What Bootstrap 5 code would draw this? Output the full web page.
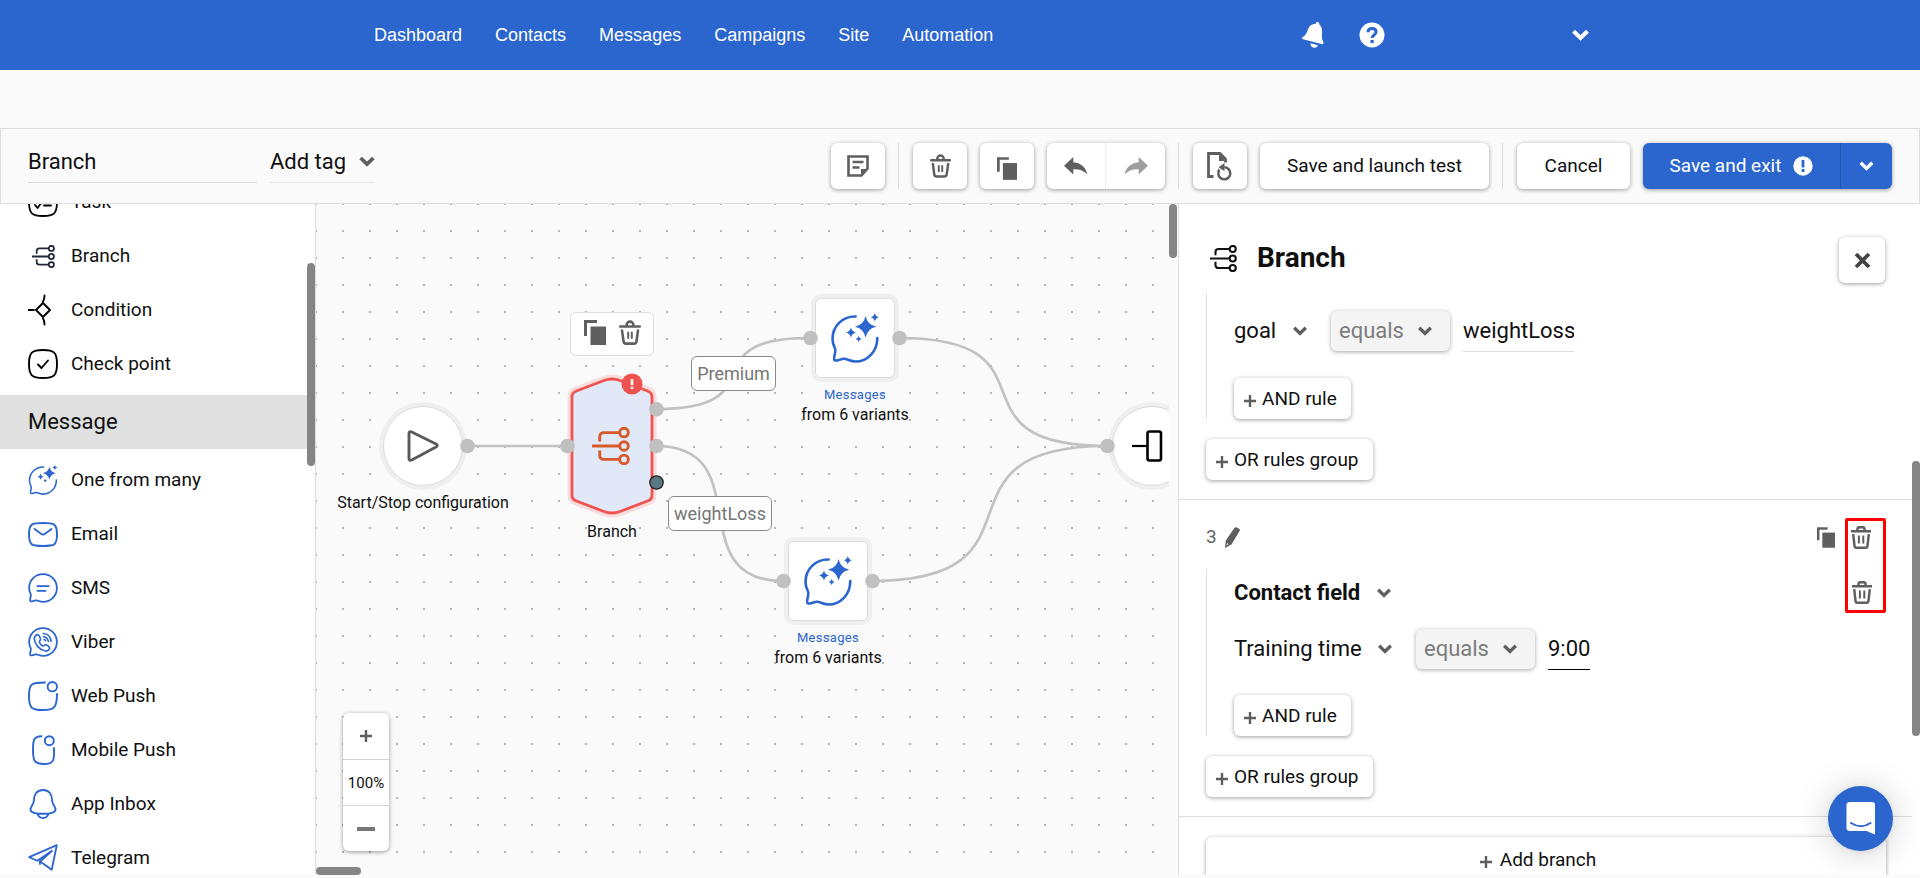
<!DOCTYPE html>
<html lang="en">
<head>
<meta charset="utf-8">
<meta name="viewport" content="width=device-width, initial-scale=1">
<title>Branch – workflow editor</title>
<link rel="stylesheet" href="https://cdn.jsdelivr.net/npm/bootstrap@5.3.0/dist/css/bootstrap.min.css">
<style>
:root{--brand:#2b65ce;--ink:#101010;--soft:#5f5f5f;--rule:#dedede;--field:22px;--text:19px}
body{font-family:Roboto,"Liberation Sans",sans-serif;font-size:var(--text);line-height:24px;color:var(--ink);background:#fafafa}
svg{display:block;flex:none}
.ln{fill:none;stroke:currentColor;stroke-linecap:round;stroke-linejoin:round}
.topbar{height:70px;background:var(--brand);font-family:"Liberation Sans",Arial,sans-serif;font-size:18px}
.topbar .menu{padding-left:374px;gap:33px}
.topbar a,.topbar button{color:#fff;text-decoration:none}
.topbar .tools{padding-right:331px}
.bare{background:none;border:0;padding:0;color:var(--soft)}
.tag-gap{height:58px}
.toolbar{height:76px;border:1px solid var(--rule);padding:0 27px}
.line-input{border:0;border-bottom:1px solid var(--rule);border-radius:0;background:transparent;padding:0;font-size:var(--field);height:42px;color:var(--ink)}
.name-input{width:229px}
.chev{appearance:none;width:auto;border:0;border-radius:0;background-color:transparent;padding:0 30px 0 0;font-size:var(--field);line-height:30px;height:40px;color:var(--ink);
 background-image:url("data:image/svg+xml,%3Csvg xmlns='http://www.w3.org/2000/svg' viewBox='0 0 14 10'%3E%3Cpath d='M1.2 1.8 7 7.4l5.800-5.600' fill='none' stroke='%235f5f5f' stroke-width='3.400'/%3E%3C/svg%3E");background-position:right 0 center;background-size:14px 10px;background-repeat:no-repeat}
.tag-select{height:42px;border-bottom:1px solid #e6e6e6;padding-right:30px;background-size:16px 11px;width:105px;margin-left:13px}
.rbtn{background:#fff;border:0;border-radius:6px;box-shadow:0 1px 4px rgba(0,0,0,.38);color:var(--ink);font-size:var(--text);line-height:24px;display:flex;align-items:center;justify-content:center;padding:0}
.rbtn:hover{background:#fff}
.rbtn + .rbtn{margin-left:13px}
.tall{height:46px}
.sq{width:54px}
.ico{color:var(--soft)}
.sep{width:1px;height:46px;background:var(--rule);margin:0 14px 0 13px}
.rbtn.main{background:var(--brand);color:#fff}
.workspace{min-height:0;padding-bottom:3px}
.sidebar{width:316px;border-right:1px solid var(--rule);background:#fff;overflow:hidden;position:relative}
.sidebar .rows{margin-top:-29px}
.sidebar .rows a{height:54px;flex:none;padding-left:28px;gap:13px;color:var(--ink);text-decoration:none;display:flex;align-items:center}
.sidebar .rows span.pic{width:30px;height:30px;display:flex;align-items:center;justify-content:center;color:#000}
.sidebar .rows .msg span.pic{color:var(--brand)}
.sidebar h2{font-size:var(--field);line-height:54px;font-weight:400;background:#e0e0e0;margin:4px 0;padding-left:28px}
.thumb{position:absolute;background:#858585;border-radius:4px}
.canvas-wrap{position:relative;min-width:0;padding:0 9px 8px 0;background:#fafafa}
.canvas-area{position:relative;overflow:hidden;height:100%;background:#fafafa radial-gradient(circle at 1px 1px,#a0a0a0 0,#b8b8b8 .8px,transparent 1px) -1px -1px/27px 27px}
.canvas-area > svg,.node,.cap,.edge-tag,.float-tools,.zoomer{position:absolute}
.node{background:#fff;border:1px solid #dcdcdc;box-shadow:0 0 0 4px #efefef;width:80px;height:80px;display:flex;align-items:center;justify-content:center}
.node.round{border-radius:50%}
.node.box{border-radius:6px}
.cap{font-size:16px;line-height:20px;width:200px;text-align:center}
.cap small{display:block;font-size:13px;line-height:20px;letter-spacing:.3px;color:var(--brand)}
.edge-tag{background:#fff;border:1px solid #8a8a8a;border-radius:6px;color:#767676;font-size:18px;line-height:33px;text-align:center}
.float-tools{background:#fff;border:1px solid var(--rule);border-radius:6px;width:84px;height:44px;padding:0 0 4px;gap:13px}
.zoomer{left:27px;bottom:16px;width:46px;border-radius:6px;background:#fff;box-shadow:0 1px 4px rgba(0,0,0,.4);font-size:15px}
.zoomer > *{height:46px;display:flex;align-items:center;justify-content:center}
.zoomer > * + *{border-top:1px solid #d4d4d4}
.panel{width:742px;border-left:1px solid var(--rule);background:#fff;position:relative;overflow:hidden;padding-right:8px}
.panel h1{font-size:28px;line-height:32px;font-weight:700;margin:0}
.panel-head{padding:0 27px 0 31px;height:108px;margin-bottom:-19px}
.section{padding:0 26px 19px 27px;border-bottom:1px solid var(--rule)}
.group{border-left:1px solid var(--rule);padding-left:27px;margin-bottom:20px}
.small-btn{height:41px;padding:0 14px 0 10px;gap:6px}
.eq{background-color:#f4f4f4;color:#7c7c7c;border-radius:6px;box-shadow:0 1px 4px rgba(0,0,0,.35);padding:0 46px 0 8px;background-position:right 18px center}
.mark-box{position:absolute;border:3px solid #f00;border-radius:2px;width:41px;height:95px;left:666px;top:314px}
.chat{position:absolute;right:27px;bottom:24px;width:65px;height:65px;border-radius:50%;background:var(--brand);border:0;padding:0;box-shadow:0 1px 6px rgba(0,0,0,.08),0 2px 36px rgba(0,0,0,.18)}
</style>
</head>
<body>
<svg width="0" height="0" class="position-absolute" aria-hidden="true">
 <defs>
  <symbol id="copy" viewBox="0 0 22 25"><path d="M1.500 16V1.500H13" fill="none" stroke="currentColor" stroke-width="3"/><path d="M6.500 6.500H22V25H6.500z" fill="currentColor"/></symbol>
  <symbol id="trash" viewBox="0 0 22 25"><g class="ln"><path d="M7.600 6V5a3.400 3.400 0 0 1 6.800 0V6M1.200 6.500H20.800" stroke-width="2.600"/><path d="M3 10.500 4.500 21.300q.3 2.300 2.500 2.300h8q2.200 0 2.500-2.300L19 10.500" stroke-width="2.600"/><path d="M9.200 12.500v5.500M12.800 12.500v5.500" stroke-width="2"/></g></symbol>
  <symbol id="trash2" viewBox="0 0 20 23"><g fill="none" stroke="currentColor" stroke-width="2.500"><path d="M0 5.200H20M6.500 5V3Q6.500 1.300 8.200 1.300h3.600Q13.500 1.300 13.500 3V5"/><path d="M2.200 8.200 3.600 20.500q.1 1.200 1.300 1.200h10.200q1.200 0 1.300-1.200L17.800 8.200"/><path d="M7.900 9.500v8M12.300 9.500v8" stroke-width="2"/></g></symbol>
  <symbol id="branch" viewBox="0 0 38 38"><g fill="none" stroke="currentColor" stroke-width="2.900"><circle cx="32" cy="5.600" r="4.300"/><circle cx="32" cy="19" r="4.300"/><circle cx="32" cy="32.400" r="4.300"/><path d="M0 19H27.700M7.700 14.500V10q0-4.400 4.400-4.400H27.700M7.700 23.500V28q0 4.400 4.400 4.400H27.700"/></g></symbol>
  <symbol id="spark" viewBox="0 0 48 50"><path class="ln" stroke-width="2.600" d="M24.600 3.500C12 3 1.500 13 1.500 26c0 3.500 1 6.500 2.500 9.500 1 2 .3 3.500-.3 6-.7 3-1.200 5 .2 5.800 1.500.8 4-.8 8.500-1.500 3.500-.4 7 2.700 12 2.700C36.500 48.500 46.300 38.500 46.300 25"/><g fill="currentColor"><path d="M34.600 3q1.800 8.900 10.700 10.700q-8.900 1.800-10.700 10.700q-1.800-8.900-10.700-10.700q8.900-1.800 10.700-10.700z"/><path d="M43.800 0q.8 3.500 4.200 4.300q-3.400.8-4.200 4.200q-.8-3.400-4.200-4.200q3.400-.8 4.200-4.300z"/><path d="M20 14.600q.9 4.100 5 5q-4.100.9-5 5q-.9-4.100-5-5q4.100-.9 5-5z"/><path d="M27.600 23q.6 2.400 3 3q-2.400.6-3 3q-.6-2.400-3-3q2.400-.6 3-3z"/></g></symbol>
  <symbol id="bubble" viewBox="0 0 48 48"><path class="ln" stroke-width="2.900" d="M24 1.800C11.500 1.800 1.800 11.500 1.800 24c0 3.500.9 6.500 2.400 9.500 1 2 .3 3.500-.3 6-.7 3-1.200 5 .2 5.800 1.500.8 4-.8 8.300-1.500 3.500-.4 6.600 2.400 11.600 2.400C36.500 46.200 46.200 36.500 46.200 24S36.500 1.800 24 1.800z"/></symbol>
  <symbol id="plus" viewBox="0 0 12 12"><path d="M6 0V12M0 6H12" stroke="currentColor" stroke-width="2.400"/></symbol>
  <symbol id="down" viewBox="0 0 14 10"><path d="M1.200 1.800 7 7.400l5.800-5.600" fill="none" stroke="currentColor" stroke-width="3.400"/></symbol>
  <symbol id="undo" viewBox="0 0 24 18"><path fill="currentColor" d="M0 8.800 9.300 0V5.200C16.500 5.800 21.800 10 23.500 17.600 19 13.200 15 12.200 9.300 12.300V17.600z"/></symbol>
 </defs>
</svg>

<div class="d-flex flex-column vh-100 overflow-hidden">
<header class="topbar d-flex align-items-center justify-content-between flex-shrink-0">
 <nav class="menu d-flex">
  <a href="#">Dashboard</a><a href="#">Contacts</a><a href="#">Messages</a><a href="#">Campaigns</a><a href="#">Site</a><a href="#">Automation</a>
 </nav>
 <div class="tools d-flex align-items-center">
  <button class="bare" aria-label="Notifications"><svg width="22" height="27" viewBox="0 0 22 27" fill="#fff"><path d="M15.500 0a1.800 1.800 0 0 1 1.600 2.300C20 4.500 20.300 8 20 12c-.2 3.500 0 5.800 1.300 7.800.4.800 0 2.700-.8 2.500L.9 17.200c-1-.3-1.200-1.400-.3-1.900 2.800-1.700 4-4 5-7C6.900 4.500 9 1.900 13.500 2 13.800.8 14.500 0 15.500 0z"/><path d="M8.500 21.300 16 23.300q-1.200 3-4.300 2.500-3-.8-3.200-4.500z"/></svg></button>
  <button class="bare" aria-label="Help" style="margin-left:35px"><svg width="26" height="26" viewBox="0 0 26 26"><circle cx="13" cy="13" r="12.500" fill="#fff"/><path d="M9 10.200C9 7.800 10.700 6.500 13 6.500s4.100 1.300 4.100 3.500c0 3-4 3-4 5.900" fill="none" stroke="#2b65ce" stroke-width="2.900"/><path d="M11.500 18h3.200v3h-3.200z" fill="#2b65ce"/></svg></button>
  <button class="bare" aria-label="Account menu" style="margin-left:187px"><svg width="17" height="12"><use href="#down"/></svg></button>
 </div>
</header>

<div class="tag-gap flex-shrink-0"></div>

<div class="toolbar d-flex align-items-center justify-content-between flex-shrink-0">
 <div class="d-flex mb-2">
  <input class="line-input name-input" type="text" value="Branch" aria-label="Workflow name">
  <select class="chev tag-select" aria-label="Add tag"><option>Add tag</option></select>
 </div>
 <div class="d-flex align-items-center">
  <button class="rbtn tall sq ico" aria-label="Notes"><svg width="22" height="22" viewBox="0 0 22 22"><path d="M1.500 1.500h19v12l-6 7h-13z" fill="none" stroke="currentColor" stroke-width="2.600"/><path d="M14 21v-7h7z" fill="currentColor"/><path d="M5.500 7h11M5.500 12.500h7" stroke="currentColor" stroke-width="2.300"/></svg></button>
  <i class="sep"></i>
  <button class="rbtn tall sq ico" aria-label="Delete"><svg width="21" height="24"><use href="#trash"/></svg></button>
  <button class="rbtn tall sq ico" aria-label="Copy"><svg class="mt-1" width="20" height="23"><use href="#copy"/></svg></button>
  <div class="rbtn" role="group">
   <button class="bare tall d-flex align-items-center justify-content-center" style="width:58px" aria-label="Undo"><svg width="24" height="18"><use href="#undo"/></svg></button>
   <button class="bare tall d-flex align-items-center justify-content-center border-start" style="width:60px;opacity:.6" aria-label="Redo" disabled><svg width="24" height="18" viewBox="0 0 24 18"><path fill="currentColor" d="M24 8.800 14.700 0V5.200C7.500 5.800 2.200 10 .5 17.600 5 13.200 9 12.200 14.700 12.300V17.600z"/></svg></button>
  </div>
  <i class="sep"></i>
  <button class="rbtn tall sq ico" aria-label="Version history"><svg width="26" height="29" viewBox="0 0 26 29"><path d="M6.500 24.500H1.500V1.500H13L18.500 7v3.500" fill="none" stroke="currentColor" stroke-width="2.800"/><path d="M12 1v8h7z" fill="currentColor"/><path d="M17.300 15.300a6 6 0 1 1-6 6.700" fill="none" stroke="currentColor" stroke-width="2.500"/><path d="M17.500 11v8.300L11.500 15.200z" fill="currentColor"/><path d="M11.500 22q-.5-3 1-4.500" fill="none" stroke="currentColor" stroke-width="2.500"/></svg></button>
  <button class="rbtn tall px-4" style="width:229px">Save and launch test</button>
  <i class="sep"></i>
  <button class="rbtn tall px-4" style="width:113px">Cancel</button>
  <div class="rbtn main">
   <button class="bare tall text-white d-flex align-items-center justify-content-center gap-2" style="width:197px">Save and exit
    <svg class="ms-1" width="20" height="20" viewBox="0 0 20 20"><circle cx="10" cy="10" r="9.700" fill="#fff"/><path d="M10 4v7.500M10 13v3" stroke="#2b65ce" stroke-width="2.800"/></svg></button>
   <button class="bare tall text-white d-flex align-items-center justify-content-center" style="width:52px;border-left:1px solid #2353ab" aria-label="More save options"><svg width="15" height="10"><use href="#down"/></svg></button>
  </div>
 </div>
</div>

<main class="workspace d-flex flex-grow-1">
 <aside class="sidebar flex-shrink-0">
  <div class="rows d-flex flex-column">
   <a href="#"><span class="pic"><svg width="30" height="30" viewBox="0 0 30 30" class="ln" stroke-width="1.800"><path d="M15 1C4 1 1 3.500 1 15s3 14 14 14 14-2.500 14-14S26 1 15 1zM7 18l2.500 3 4.500-6M16 18.500h7M16 11h7M7 10l2.500 2 4-5"/></svg></span>Task</a>
   <a href="#"><span class="pic"><svg width="23" height="23" color="#22263a"><use href="#branch"/></svg></span>Branch</a>
   <a href="#"><span class="pic"><svg width="30" height="32" viewBox="0 0 30 32" class="ln" stroke-width="1.900"><path d="M15 9l7 7-7 7-7-7zM0 16h6M16.500 1.500q0 4-1.500 6M15 24.500q1.500 2 1.500 6"/></svg></span>Condition</a>
   <a href="#"><span class="pic"><svg width="30" height="30" viewBox="0 0 30 30" class="ln" stroke-width="1.900"><path d="M15 1C4 1 1 3.500 1 15s3 14 14 14 14-2.500 14-14S26 1 15 1zM10 15.500l3.500 3.500 6.500-7.500"/></svg></span>Check point</a>
   <h2>Message</h2>
   <a class="msg" href="#"><span class="pic"><svg width="30" height="30"><use href="#spark"/></svg></span>One from many</a>
   <a class="msg" href="#"><span class="pic"><svg width="30" height="25" viewBox="0 0 30 25" class="ln" stroke-width="1.900"><path d="M15 1C4 1 1 1.500 1 12.500S4 24 15 24s14-.5 14-11.500S26 1 15 1zM6.500 7 13 11.800q2 1.400 4 0L23.500 7"/></svg></span>Email</a>
   <a class="msg" href="#"><span class="pic"><svg width="30" height="30" viewBox="0 0 48 48"><use href="#bubble"/><path class="ln" stroke-width="2.900" d="M15 21h18M15 28.500h13"/></svg></span>SMS</a>
   <a class="msg" href="#"><span class="pic"><svg width="30" height="30" viewBox="0 0 48 48"><use href="#bubble"/><g class="ln" stroke-width="2.600"><path d="M16 12.500c-2-1-6 2.500-6 6.500 1 9 8 17.500 18 19.500 4 .6 7.500-3.500 6.500-5.500-1-2.200-4-4-6-4.600-2.200-.5-2.800 2.600-5 1.800-2.500-1-4.500-3.500-5.300-6-.6-2 2.300-2.700 1.800-5-.5-2.200-2-5.600-4-6.700z"/><path d="M24.500 10.500c7 .5 12 5.500 12.500 12.500M25 15.500c4 .5 7 3.500 7.500 7.500M26 20q1.700.5 2 2"/></g></svg></span>Viber</a>
   <a class="msg" href="#"><span class="pic"><svg width="30" height="30" viewBox="0 0 30 30" class="ln" stroke-width="1.900"><circle cx="24.300" cy="5.700" r="4.700"/><path d="M17 1.500C3.500 1.500 1 2.500 1 15s3 14 14 14 14-2.500 14-16"/></svg></span>Web Push</a>
   <a class="msg" href="#"><span class="pic"><svg width="30" height="30" viewBox="0 0 30 30" class="ln" stroke-width="1.900"><circle cx="21.300" cy="5.700" r="4.500"/><path d="M13.500 1.200C6 1.500 5 4 5 15s1.500 14 11 14 10.500-3 10-16"/></svg></span>Mobile Push</a>
   <a class="msg" href="#"><span class="pic"><svg width="30" height="30" viewBox="0 0 30 30" class="ln" stroke-width="1.900"><path d="M15 1C8.500 1 5.800 6 5.800 12 5.500 16 2.500 17.500 2.500 20.500S7 24.800 15 24.800s12.500-1.300 12.500-4.300-3-4.500-3.300-8.500C24.200 6 21.500 1 15 1zM9.500 25q1.500 4 5.500 4t5.500-4"/></svg></span>App Inbox</a>
   <a class="msg" href="#"><span class="pic"><svg width="30" height="28" viewBox="0 0 30 28" class="ln" stroke-width="1.800"><path d="M1.200 13.200 28.800 1.200 23.700 25.800 12.200 17.500 24 6.800 9.300 16.800z"/><path d="M12 20v-3"/></svg></span>Telegram</a>
  </div>
  <div class="thumb" style="right:0;top:59px;width:8px;height:203px"></div>
 </aside>

 <section class="canvas-wrap flex-grow-1">
  <div class="canvas-area">
   <svg width="860" height="663" fill="none" stroke="#c2c2c2" stroke-width="2.700">
    <path d="M151 242H251M340 205C465 205 370 134 494 134M340 242C443 242 364 377 467 377M583 134C749 134 625 242 791 242M556 377C742 377 605 242 791 242"/>
    <g stroke-linejoin="round">
     <path d="M256 193Q256 188.500 260.500 187L288 176.500Q296 173.500 304 176.500L331.500 187Q336 188.500 336 193V291Q336 295.500 331.500 297L304 307.500Q296 310.500 288 307.500L260.500 297Q256 295.500 256 291Z" stroke="#fbdcdc" stroke-width="9"/>
     <path d="M256 193Q256 188.500 260.500 187L288 176.500Q296 173.500 304 176.500L331.500 187Q336 188.500 336 193V291Q336 295.500 331.500 297L304 307.500Q296 310.500 288 307.500L260.500 297Q256 295.500 256 291Z" fill="#e1e8f8" stroke="#ef5350" stroke-width="2.800"/>
    </g>
    <circle cx="316" cy="180" r="10.500" fill="#ef5350" stroke="none"/><path d="M316 175v6M316 182.500v2.500" stroke="#fff" stroke-width="2.600"/>
   </svg>
   <div class="node round" style="left:67px;top:202px"><svg width="32" height="32" viewBox="0 0 32 32" class="ln" color="#5a5a5a" stroke-width="2.900"><path d="M2 3.500Q2 .8 4.800 2L29 14Q31.500 15.500 29 17L4.800 30Q2 31.200 2 28.500z"/></svg></div>
   <svg style="left:276px;top:223px" width="38" height="38" color="#d85a2b"><use href="#branch"/></svg>
   <div class="node box" style="left:499px;top:94px"><svg width="48" height="50" color="#2b65ce"><use href="#spark"/></svg></div>
   <div class="node box" style="left:472px;top:337px"><svg width="48" height="50" color="#2b65ce"><use href="#spark"/></svg></div>
   <div class="node round" style="left:796px;top:202px"><svg width="40" height="32" viewBox="0 0 40 32" fill="none" stroke="#000" stroke-width="2.200"><path d="M0 16H15"/><rect x="15.500" y="1.500" width="13.500" height="29" rx="2" stroke-width="2.600"/></svg></div>
   <svg width="860" height="663" fill="#c0c0c0">
    <circle cx="151.500" cy="242" r="7.300"/><circle cx="251.500" cy="242" r="7.300"/><circle cx="340.500" cy="205.300" r="7.300"/><circle cx="340.500" cy="242" r="7.300"/>
    <circle cx="340.500" cy="278.500" r="6.700" fill="#5a7882" stroke="#222" stroke-width="1.300"/>
    <circle cx="494.500" cy="134" r="7.300"/><circle cx="583.500" cy="134" r="7.300"/><circle cx="467.500" cy="377" r="7.300"/><circle cx="556.500" cy="377" r="7.300"/><circle cx="791.500" cy="242" r="7.300"/>
   </svg>
   <div class="cap" style="left:7px;top:289px">Start/Stop configuration</div>
   <div class="cap" style="left:196px;top:318px">Branch</div>
   <div class="cap" style="left:439px;top:181px"><small>Messages</small>from 6 variants</div>
   <div class="cap" style="left:412px;top:424px"><small>Messages</small>from 6 variants</div>
   <div class="edge-tag" style="left:375px;top:152px;width:85px">Premium</div>
   <div class="edge-tag" style="left:352px;top:292px;width:104px">weightLoss</div>
   <div class="float-tools d-flex align-items-center justify-content-center" style="left:254px;top:108px">
    <button class="bare" aria-label="Copy node"><svg width="22" height="25"><use href="#copy"/></svg></button>
    <button class="bare" aria-label="Delete node"><svg width="22" height="25"><use href="#trash"/></svg></button>
   </div>
   <div class="zoomer">
    <button class="bare w-100" aria-label="Zoom in"><svg width="12" height="12"><use href="#plus"/></svg></button>
    <div>100%</div>
    <button class="bare w-100" aria-label="Zoom out"><svg width="18" height="4"><path d="M0 2H18" stroke="#777" stroke-width="4"/></svg></button>
   </div>
  </div>
  <div class="thumb" style="right:1px;top:0;width:8px;height:54px"></div>
  <div class="thumb" style="left:0;bottom:0;width:45px;height:8px"></div>
 </section>

 <aside class="panel flex-shrink-0">
  <div class="panel-head d-flex align-items-center">
   <svg width="27" height="27" color="#111"><use href="#branch"/></svg>
   <h1 class="ms-3 ps-1">Branch</h1>
   <button class="rbtn tall ms-auto mt-1" style="width:46px" aria-label="Close"><svg width="17" height="17" viewBox="0 0 17 17"><path d="M2 2 15 15M15 2 2 15" stroke="#444" stroke-width="3.800"/></svg></button>
  </div>
  <div class="section">
   <div class="group">
    <div class="d-flex align-items-center" style="padding:17px 0 26px">
     <select class="chev" aria-label="Field"><option>goal</option></select>
     <select class="chev eq" aria-label="Operator" style="margin-left:24px"><option>equals</option></select>
     <input class="line-input" type="text" value="weightLoss" aria-label="Value" style="width:111px;margin-left:13px">
    </div>
    <button class="rbtn small-btn"><svg class="ico mt-1" width="12" height="12"><use href="#plus"/></svg>AND rule</button>
   </div>
   <button class="rbtn small-btn"><svg class="ico mt-1" width="12" height="12"><use href="#plus"/></svg>OR rules group</button>
  </div>
  <div class="section">
   <div class="d-flex align-items-center" style="height:69px;padding:5px 15px 0 0;color:#666">3
    <button class="bare ms-2" aria-label="Rename"><svg width="15" height="21" viewBox="0 0 15 21"><path fill="currentColor" d="M9.500.8Q10.500-.3 11.800.4L14 1.800q1.200.8.7 2L6.500 17.500 0 21 .8 13.500zM1.500 18.300l2-1-1.500-1.300z" fill-rule="evenodd"/></svg></button>
    <button class="bare ms-auto" aria-label="Copy branch"><svg width="18" height="21"><use href="#copy"/></svg></button>
    <button class="bare ms-3" aria-label="Delete branch"><svg width="20" height="23"><use href="#trash2"/></svg></button>
   </div>
   <div class="group">
    <div class="d-flex align-items-center justify-content-between" style="height:47px;padding-right:14px">
     <select class="chev fw-bold" aria-label="Rule type"><option>Contact field</option></select>
     <button class="bare" aria-label="Delete rule"><svg width="20" height="23"><use href="#trash2"/></svg></button>
    </div>
    <div class="d-flex align-items-center" style="padding:12px 0 25px">
     <select class="chev" aria-label="Field"><option>Training time</option></select>
     <select class="chev eq" aria-label="Operator" style="margin-left:24px"><option>equals</option></select>
     <input class="line-input" type="text" value="9:00" aria-label="Value" style="width:42px;margin-left:13px;border-color:#000">
    </div>
    <button class="rbtn small-btn"><svg class="ico mt-1" width="12" height="12"><use href="#plus"/></svg>AND rule</button>
   </div>
   <button class="rbtn small-btn"><svg class="ico mt-1" width="12" height="12"><use href="#plus"/></svg>OR rules group</button>
  </div>
  <div style="padding:20px 26px 0 27px">
   <button class="rbtn tall w-100 gap-2 pe-3"><svg class="ico mt-1" width="12" height="12"><use href="#plus"/></svg>Add branch</button>
  </div>
  <div class="mark-box"></div>
  <div class="thumb" style="right:0;top:257px;width:8px;height:275px"></div>
  <button class="chat" aria-label="Open chat"><svg class="m-auto" width="30" height="33" viewBox="0 0 30 33"><path fill="#fff" d="M4 0H26Q29 0 29 3V32.500L20.500 29H4Q.5 29 .5 26V3Q.5 0 4 0z"/><path d="M5 21q10 6.500 19.500 0" fill="none" stroke="#2b65ce" stroke-width="2" stroke-linecap="round"/></svg></button>
 </aside>
</main>
</div>
<script src="https://cdn.jsdelivr.net/npm/bootstrap@5.3.0/dist/js/bootstrap.bundle.min.js"></script>
</body>
</html>
